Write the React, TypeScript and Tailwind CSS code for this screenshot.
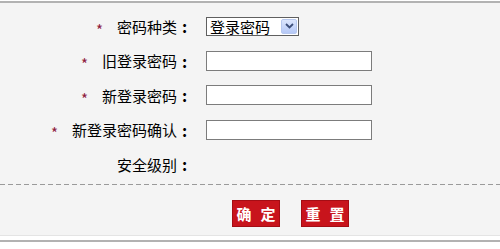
import * as React from "react";

const cjk = { fontFamily: '"Noto Sans CJK SC", "Liberation Sans", sans-serif' };

type Row = { label: string; required: boolean; field: "select" | "input" | "none" };

const rows: Row[] = [
  { label: "密码种类", required: true, field: "select" },
  { label: "旧登录密码", required: true, field: "input" },
  { label: "新登录密码", required: true, field: "input" },
  { label: "新登录密码确认", required: true, field: "input" },
  { label: "安全级别", required: false, field: "none" },
];

function FakeSelect() {
  return (
    <div className="flex h-[19px] w-[93px] items-center justify-between border border-[#5f5f5f] bg-white pl-[3px] pr-[1px]">
      <span className="text-[15px] leading-none text-black">登录密码</span>
      <span className="flex h-[15px] w-[16px] items-center justify-center rounded-[2px] border border-[#b7c8ef] bg-gradient-to-b from-[#dce6fd] to-[#b5c8f6]">
        <svg width="9" height="6" viewBox="0 0 9 6">
          <path d="M1 1 L4.5 4.5 L8 1" fill="none" stroke="#3d4f7a" strokeWidth="1.8" />
        </svg>
      </span>
    </div>
  );
}

function RedButton({ chars }: { chars: [string, string] }) {
  return (
    <button
      type="button"
      className="flex h-[27px] w-[48px] items-center justify-center gap-[9px] border border-[#a50d14] bg-[#c8141c] text-[15px] font-bold leading-none text-white"
    >
      <span>{chars[0]}</span>
      <span>{chars[1]}</span>
    </button>
  );
}

export default function App() {
  return (
    <div className="h-[249px] w-[500px] overflow-hidden bg-white" style={cjk}>
      <div className="mt-[1px] h-[2px] bg-[#b2b2b2]" />
      <div className="h-[233px] border-b border-[#e4e4e4] bg-[#f4f4f4] pt-[6px]">
        <div className="flex flex-col">
          {rows.map((r) => (
            <div key={r.label} className="flex h-[34.5px] items-center">
              <div className="flex w-[192px] items-center justify-end">
                {r.required && (
                  <span className="mr-[14px] translate-y-[3px] text-[15px] leading-none text-[#8e1a3c]">*</span>
                )}
                <span className="text-[15px] leading-none text-black">{r.label}</span>
                <span className="flex w-[15px] justify-center text-[16px] font-bold leading-none text-black">:</span>
              </div>
              <div className="ml-[14px]">
                {r.field === "select" && <FakeSelect />}
                {r.field === "input" && (
                  <input
                    type="password"
                    className="block h-[20px] w-[166px] border border-[#7c7c7c] bg-white outline-none"
                  />
                )}
              </div>
            </div>
          ))}
        </div>

        <div className="mt-[2px] h-[1px] bg-[repeating-linear-gradient(90deg,#9a9a9a_0_5px,transparent_5px_8px)]" />

        <div className="mt-[15px] flex gap-[21px] pl-[232px]">
          <RedButton chars={["确", "定"]} />
          <RedButton chars={["重", "置"]} />
        </div>
      </div>
      <div className="mt-[4px] h-[2px] bg-[#b2b2b2]" />
    </div>
  );
}
